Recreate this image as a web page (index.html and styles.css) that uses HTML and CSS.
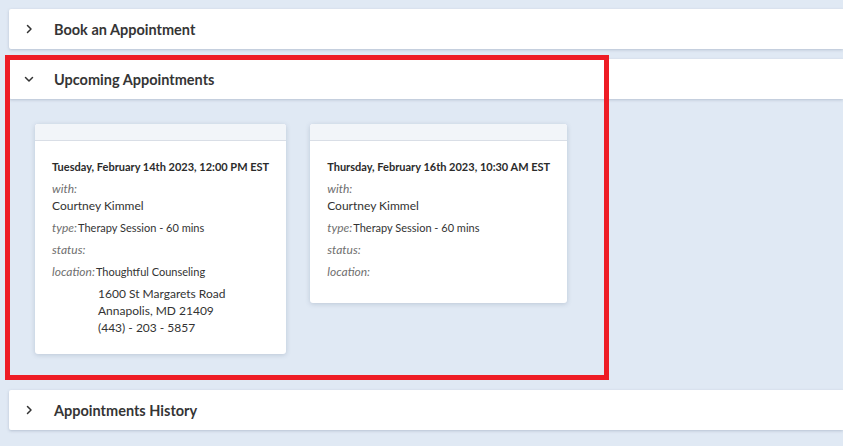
FILE: index.html
```html
<!DOCTYPE html>
<html lang="en">
  <head>
    <meta charset="UTF-8" />
    <meta name="viewport" content="width=device-width, initial-scale=1.0" />
    <title>Appointments</title>
    <link rel="stylesheet" href="styles.css">
  </head>
  <body>
    <div id="container">
      <div class="panel">
        <div class="panel-header">
          <svg class="chevron" width="10" height="10" viewBox="0 0 10 10">
            <polyline points="3.5,1.5 7,5 3.5,8.5" />
          </svg>
          <h2>Book an Appointment</h2>
        </div>
      </div>

      <div class="panel open">
        <div class="panel-header">
          <svg class="chevron" width="10" height="10" viewBox="0 0 10 10">
            <polyline points="1.5,3.5 5,7 8.5,3.5" />
          </svg>
          <h2>Upcoming Appointments</h2>
        </div>
        <div class="panel-body">
          <div class="card">
            <div class="card-top"></div>
            <div class="card-body">
              <h3>Tuesday, February 14th 2023, 12:00 PM EST</h3>
              <div class="field">
                <span class="label">with:</span>
                <div class="value">Courtney Kimmel</div>
              </div>
              <div class="field"><span class="label">type:</span><span class="inline-value">Therapy Session - 60 mins</span></div>
              <div class="field"><span class="label">status:</span></div>
              <div class="field">
                <span class="label">location:</span><span class="inline-value">Thoughtful Counseling</span>
                <div class="address">
                  1600 St Margarets Road<br />
                  Annapolis, MD 21409<br />
                  (443) - 203 - 5857
                </div>
              </div>
            </div>
          </div>

          <div class="card">
            <div class="card-top"></div>
            <div class="card-body">
              <h3>Thursday, February 16th 2023, 10:30 AM EST</h3>
              <div class="field">
                <span class="label">with:</span>
                <div class="value">Courtney Kimmel</div>
              </div>
              <div class="field"><span class="label">type:</span><span class="inline-value">Therapy Session - 60 mins</span></div>
              <div class="field"><span class="label">status:</span></div>
              <div class="field">
                <span class="label">location:</span>
                <div class="address"></div>
              </div>
            </div>
          </div>
        </div>
      </div>

      <div class="panel">
        <div class="panel-header">
          <svg class="chevron" width="10" height="10" viewBox="0 0 10 10">
            <polyline points="3.5,1.5 7,5 3.5,8.5" />
          </svg>
          <h2>Appointments History</h2>
        </div>
      </div>

      <div class="highlight"></div>
    </div>
  </body>
</html>
```

FILE: styles.css
```css
* {
  margin: 0;
  padding: 0;
  box-sizing: border-box;
}
html,
body {
  width: 100%;
  height: 100%;
  overflow: hidden;
}
body {
  background-color: #e0e9f4;
  font-family: Lato, "Noto Sans", sans-serif;
  color: #333;
}
#container {
  position: relative;
  padding: 9px 0 0 9px;
}
.panel {
  margin-bottom: 10px;
}
.panel.open {
  margin-bottom: 11px;
}
.panel-header {
  display: flex;
  align-items: center;
  height: 40px;
  background-color: #fff;
  border-radius: 2px 0 0 2px;
  box-shadow: 0 1px 3px rgba(60, 80, 110, 0.25);
}
.chevron {
  margin-left: 15px;
  margin-right: 20px;
  fill: none;
  stroke: #333;
  stroke-width: 1.5;
  stroke-linecap: round;
  stroke-linejoin: round;
}
.panel-header h2 {
  font-size: 14.5px;
  font-weight: 700;
  color: #353535;
}
.panel-body {
  display: flex;
  align-items: flex-start;
  gap: 24px;
  padding: 25px 26px;
}
.card {
  background-color: #fff;
  border-radius: 3px;
  box-shadow: 0 1px 5px rgba(60, 80, 110, 0.22);
}
.card-top {
  height: 17px;
  background-color: #f2f5f9;
  border-bottom: 1px solid #d9dee6;
  border-radius: 3px 3px 0 0;
}
.card-body {
  display: flex;
  flex-direction: column;
  gap: 5px;
  padding: 17px 17px 18px;
  font-size: 12px;
  line-height: 17px;
}
.card-body h3 {
  font-size: 11px;
  font-weight: 700;
  color: #2b2b2b;
}
.label {
  font-style: italic;
  color: #6f6f6f;
  margin-right: 1px;
}
.inline-value {
  font-size: 11px;
}
.address {
  margin-top: 5px;
  padding-left: 46px;
}
.highlight {
  position: absolute;
  left: 5px;
  top: 55px;
  width: 604px;
  height: 325px;
  border: 5px solid #ee1c25;
  pointer-events: none;
}
```
